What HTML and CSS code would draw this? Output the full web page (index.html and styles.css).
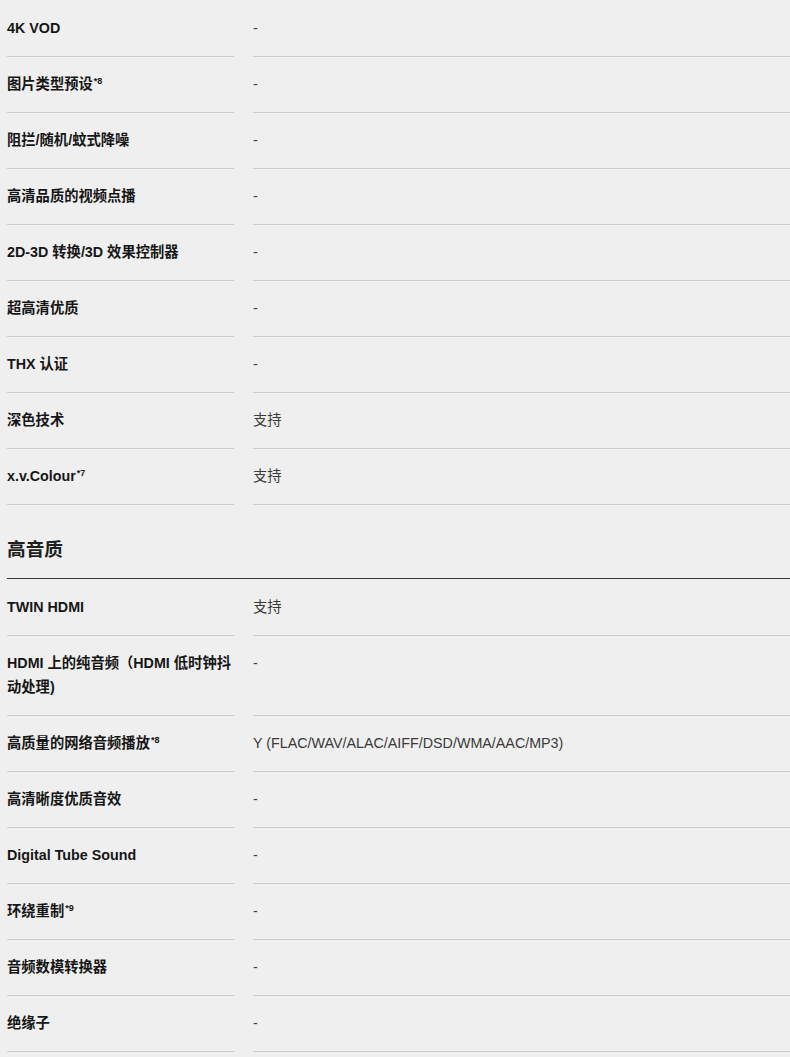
FILE: index.html
```html
<!DOCTYPE html>
<html lang="zh-CN">
<head>
    <meta charset="UTF-8">
    <meta name="viewport" content="width=device-width, initial-scale=1.0">
    <title>规格</title>
    <link rel="stylesheet" href="styles.css">
</head>
<body>

<div class="spec-list">
    <div class="spec-row"><div class="spec-name">4K VOD</div><div class="spec-value">-</div></div>
    <div class="spec-row"><div class="spec-name">图片类型预设<sup>*8</sup></div><div class="spec-value">-</div></div>
    <div class="spec-row"><div class="spec-name">阻拦/随机/蚊式降噪</div><div class="spec-value">-</div></div>
    <div class="spec-row"><div class="spec-name">高清品质的视频点播</div><div class="spec-value">-</div></div>
    <div class="spec-row"><div class="spec-name">2D-3D 转换/3D 效果控制器</div><div class="spec-value">-</div></div>
    <div class="spec-row"><div class="spec-name">超高清优质</div><div class="spec-value">-</div></div>
    <div class="spec-row"><div class="spec-name">THX 认证</div><div class="spec-value">-</div></div>
    <div class="spec-row"><div class="spec-name">深色技术</div><div class="spec-value">支持</div></div>
    <div class="spec-row"><div class="spec-name">x.v.Colour<sup>*7</sup></div><div class="spec-value">支持</div></div>
</div>

<h2 class="spec-heading">高音质</h2>

<div class="spec-list">
    <div class="spec-row"><div class="spec-name">TWIN HDMI</div><div class="spec-value">支持</div></div>
    <div class="spec-row"><div class="spec-name">HDMI 上的纯音频（HDMI 低时钟抖动处理)</div><div class="spec-value">-</div></div>
    <div class="spec-row"><div class="spec-name">高质量的网络音频播放<sup>*8</sup></div><div class="spec-value">Y (FLAC/WAV/ALAC/AIFF/DSD/WMA/AAC/MP3)</div></div>
    <div class="spec-row"><div class="spec-name">高清晰度优质音效</div><div class="spec-value">-</div></div>
    <div class="spec-row"><div class="spec-name">Digital Tube Sound</div><div class="spec-value">-</div></div>
    <div class="spec-row"><div class="spec-name">环绕重制<sup>*9</sup></div><div class="spec-value">-</div></div>
    <div class="spec-row"><div class="spec-name">音频数模转换器</div><div class="spec-value">-</div></div>
    <div class="spec-row"><div class="spec-name">绝缘子</div><div class="spec-value">-</div></div>
</div>

</body>
</html>
```

FILE: styles.css
```css
body {
    font-family: 'Liberation Sans', 'Noto Sans CJK SC', sans-serif;
    background-color: #efefef;
    color: #222;
    margin: 0;
    padding: 0 0 0 7px;
    overflow: hidden;
}

.spec-list {
    display: flex;
    flex-direction: column;
}

.spec-row {
    display: grid;
    grid-template-columns: 227px 1fr;
    column-gap: 19px;
}

.spec-name,
.spec-value {
    font-size: 14.3px;
    line-height: 24px;
    padding: 15px 0 16px;
    border-bottom: 1px solid #cdcdcd;
}

.spec-row:first-child .spec-name,
.spec-row:first-child .spec-value {
    padding-top: 16px;
    padding-bottom: 16px;
}

.spec-name {
    font-weight: bold;
    color: #161616;
}

.spec-value {
    color: #3a3a3a;
}

sup {
    font-size: 9px;
    line-height: 0;
    vertical-align: 5px;
    margin-left: 1px;
}

.spec-heading {
    margin: 0;
    font-size: 18.7px;
    line-height: 26px;
    font-weight: bold;
    color: #1e1e1e;
    padding: 32px 0 15px;
    border-bottom: 1px solid #3c3c3c;
}
```
